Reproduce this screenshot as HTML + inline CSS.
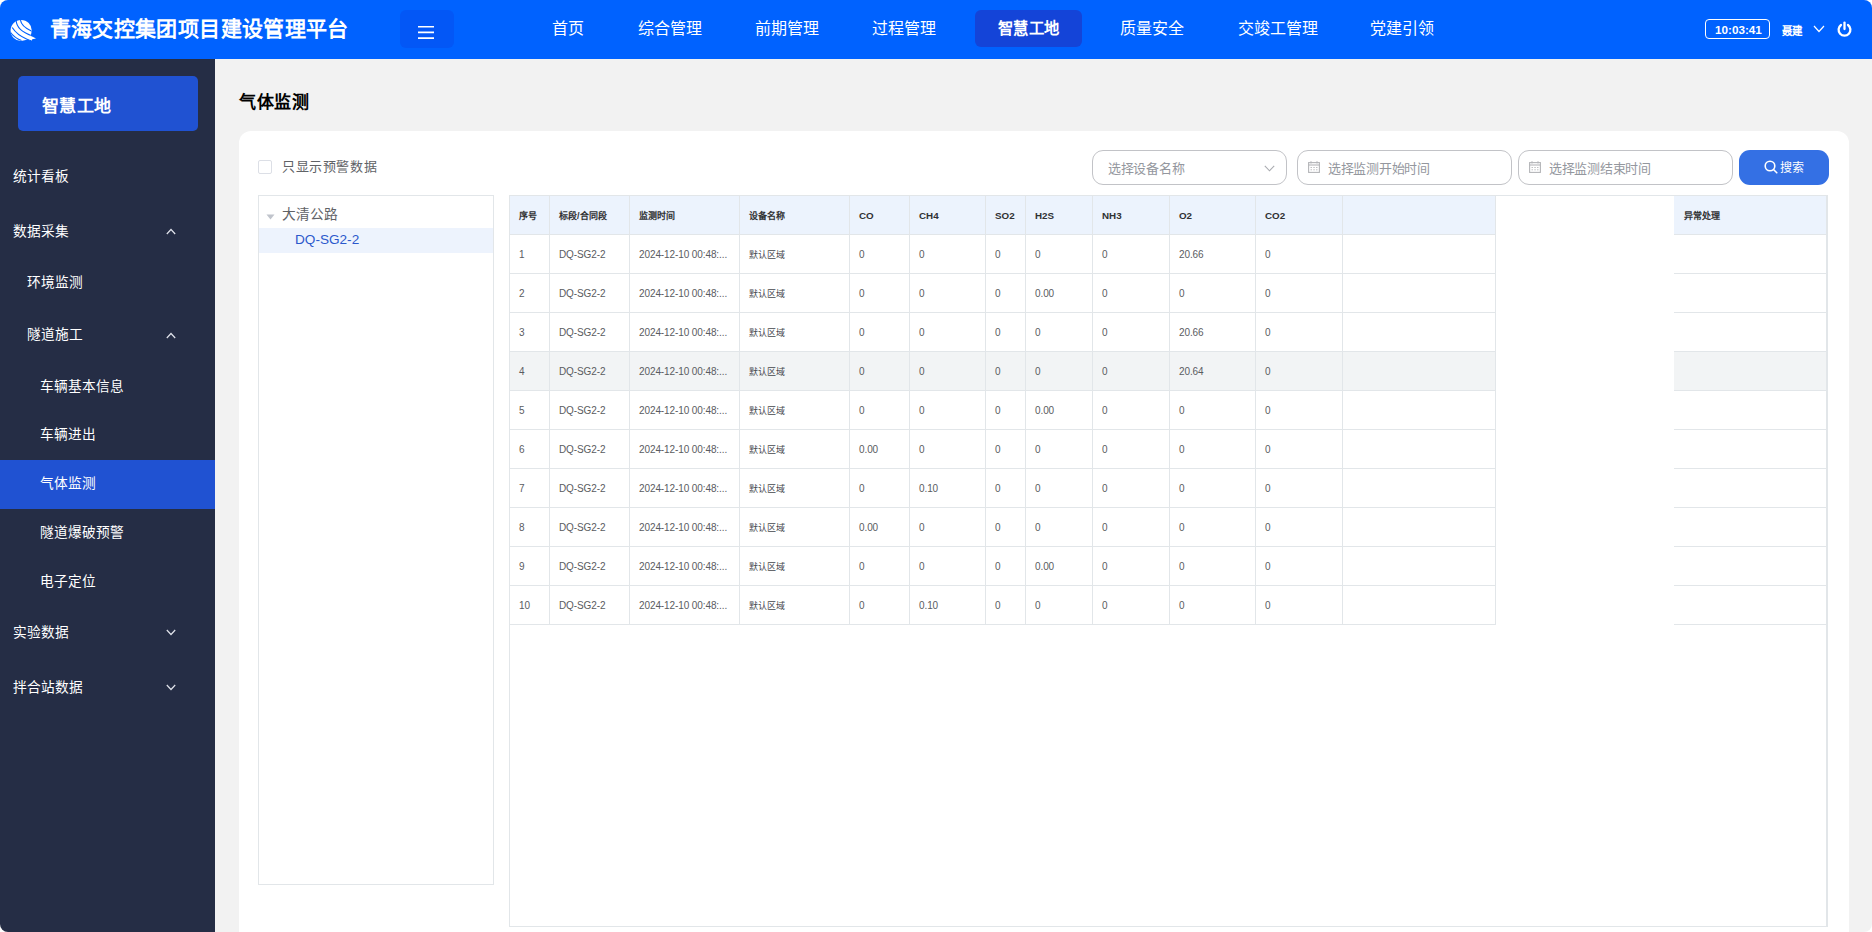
<!DOCTYPE html>
<html lang="zh-CN"><head><meta charset="utf-8">
<style>
*{box-sizing:border-box;margin:0;padding:0}
html,body{width:1872px;height:932px;overflow:hidden;background:#fff}
body{font-family:"Liberation Sans",sans-serif;position:relative}
.abs{position:absolute}
#app{position:absolute;left:0;top:0;width:1872px;height:932px;border-radius:8px;overflow:hidden;background:#f2f2f2}
#hdr{position:absolute;left:0;top:0;width:1872px;height:59px;background:#0062ff}
.t{position:absolute;white-space:nowrap;line-height:1}
.nav{color:#fff;font-size:16px;margin-top:0.6px}
#side{position:absolute;left:0;top:59px;width:215px;height:873px;background:#252d45}
.mi{position:absolute;color:#fff;font-size:13.7px;white-space:nowrap;line-height:1}
.chev{position:absolute;width:10px;height:7px}
#card{position:absolute;left:239px;top:131px;width:1610px;height:820px;background:#fff;border-radius:12px}
.inp{position:absolute;top:150px;height:35px;border:1px solid #c2c3c7;border-radius:11px;background:#fff}
.ph{position:absolute;color:#94979e;font-size:13px;letter-spacing:-0.3px;white-space:nowrap;line-height:1}
table.tb{position:absolute;border-collapse:collapse;table-layout:fixed}
.tb td,.tb th{border:1px solid #e4e7ed;height:39px;padding:0 0 0 10px;text-align:left;white-space:nowrap;overflow:hidden}
.tb th{background:#ecf3fd;color:#303133;font-size:10px;font-weight:bold}
.tb td{color:#606266;font-size:10px}
.tb tr.hv td{background:#f2f4f5}
.th{color:#303133;font-size:9.8px;font-weight:bold}
.td{color:#5a5c61;font-size:10px;letter-spacing:-0.1px}
.cj{font-size:9px}
.th.cj{margin-top:1px}
.td.cj{margin-top:0.8px;color:#45474c}
</style></head>
<body>
<div id="app">
  <div id="hdr">
    <!-- logo -->
    <svg class="abs" style="left:0;top:0" width="40" height="58" viewBox="0 0 40 58">
      <defs><clipPath id="lc"><circle cx="21.2" cy="30.5" r="10.6"/></clipPath></defs>
      <circle cx="21.2" cy="30.5" r="10.6" fill="#fff"/>
      <path d="M28.5 35 Q33 37 36 38.4 L32.2 39.3 L31.8 41 Q28 40 25.5 38.6 Z" fill="#fff"/>
      <g clip-path="url(#lc)" stroke="#0062ff" stroke-width="1.15" fill="none">
        <path d="M20.4 19.5 Q20.8 26.5 32.5 31.5"/>
        <path d="M16.2 20.5 Q16.6 30.5 32.5 36"/>
        <path d="M12.2 27.5 Q17 35 27 39.2"/>
        <path d="M10.2 32 Q14 37.5 21.5 40.5"/>
      </g>
      <path d="M27 39.2 Q29.5 40.2 31.8 41" stroke="#0062ff" stroke-width="1" fill="none"/>
    </svg>
    <div class="t" style="left:49.5px;top:17.5px;color:#fff;font-size:21px;letter-spacing:0.38px;font-weight:bold">青海交控集团项目建设管理平台</div>
    <div class="abs" style="left:400px;top:10px;width:54px;height:38px;border-radius:6px;background:#0357f6"></div>
    <svg class="abs" style="left:418px;top:24px" width="16" height="16" viewBox="0 0 16 16"><path d="M0 2.7 H16 M0 8.4 H16 M0 14.1 H16" stroke="#fff" stroke-width="1.6"/></svg>
    <div class="t nav" style="left:552px;top:20px">首页</div>
    <div class="t nav" style="left:638px;top:20px">综合管理</div>
    <div class="t nav" style="left:755px;top:20px">前期管理</div>
    <div class="t nav" style="left:872px;top:20px">过程管理</div>
    <div class="abs" style="left:975px;top:10px;width:107px;height:37px;border-radius:6px;background:#1444d8"></div>
    <div class="t nav" style="left:998px;top:20px;font-weight:bold;transform:scaleX(0.955);transform-origin:left">智慧工地</div>
    <div class="t nav" style="left:1120px;top:20px">质量安全</div>
    <div class="t nav" style="left:1238px;top:20px">交竣工管理</div>
    <div class="t nav" style="left:1370px;top:20px">党建引领</div>
    <div class="abs" style="left:1705px;top:19px;width:65px;height:20px;border:1.3px solid #fff;border-radius:4px"></div>
    <div class="t" style="left:1715px;top:24px;color:#fff;font-size:11.7px;font-weight:bold">10:03:41</div>
    <div class="t" style="left:1782px;top:26px;color:#fff;font-size:11px;font-weight:bold;transform:scaleX(0.95);transform-origin:left">聂建</div>
    <svg class="abs" style="left:1813px;top:25px" width="12" height="8" viewBox="0 0 12 8"><path d="M1 1 L6 6.5 L11 1" stroke="#fff" stroke-width="1.2" fill="none"/></svg>
    <svg class="abs" style="left:1836px;top:21px" width="17" height="16" viewBox="0 0 17 16"><path d="M5 4 A5.9 5.9 0 1 0 12 4" stroke="#fff" stroke-width="2.3" fill="none" stroke-linecap="round"/><path d="M8.5 1.6 V8" stroke="#fff" stroke-width="2.3" stroke-linecap="round"/></svg>
  </div>

  <div id="side">
    <div class="abs" style="left:18px;top:17px;width:180px;height:55px;border-radius:5px;background:#2052d2"></div>
    <div class="t" style="left:41.5px;top:38.5px;color:#fff;font-size:17px;letter-spacing:0.5px;font-weight:900">智慧工地</div>
    <div class="abs" style="left:0;top:401px;width:215px;height:49px;background:#2052d2"></div>
  </div>
  <!-- sidebar menu (page coords) -->
  <div class="mi" style="left:13px;top:170px">统计看板</div>
  <div class="mi" style="left:13px;top:225px">数据采集</div>
  <div class="mi" style="left:27px;top:276px">环境监测</div>
  <div class="mi" style="left:27px;top:328px">隧道施工</div>
  <div class="mi" style="left:40px;top:380px">车辆基本信息</div>
  <div class="mi" style="left:40px;top:428px">车辆进出</div>
  <div class="mi" style="left:40px;top:477px">气体监测</div>
  <div class="mi" style="left:40px;top:526px">隧道爆破预警</div>
  <div class="mi" style="left:40px;top:575px">电子定位</div>
  <div class="mi" style="left:13px;top:626px">实验数据</div>
  <div class="mi" style="left:13px;top:681px">拌合站数据</div>
  <svg class="chev" style="left:166px;top:228px" viewBox="0 0 10 7"><path d="M0.8 6 L5 1.5 L9.2 6" stroke="#dfe2ea" stroke-width="1.2" fill="none"/></svg>
  <svg class="chev" style="left:166px;top:332px" viewBox="0 0 10 7"><path d="M0.8 6 L5 1.5 L9.2 6" stroke="#dfe2ea" stroke-width="1.2" fill="none"/></svg>
  <svg class="chev" style="left:166px;top:629px" viewBox="0 0 10 7"><path d="M0.8 1 L5 5.5 L9.2 1" stroke="#dfe2ea" stroke-width="1.2" fill="none"/></svg>
  <svg class="chev" style="left:166px;top:684px" viewBox="0 0 10 7"><path d="M0.8 1 L5 5.5 L9.2 1" stroke="#dfe2ea" stroke-width="1.2" fill="none"/></svg>

  <div class="t" style="left:239px;top:93.5px;color:#000;font-size:17px;letter-spacing:0.6px;font-weight:bold">气体监测</div>
  <div id="card"></div>
  <div class="abs" style="left:258px;top:159.5px;width:14px;height:14px;border:1px solid #dcdfe6;border-radius:2px;background:#fff"></div>
<div class="t" style="left:282px;top:160px;color:#606266;font-size:13px;letter-spacing:0.6px">只显示预警数据</div>
<div class="abs" style="left:258px;top:195px;width:236px;height:690px;border:1px solid #e2e6e9"></div>
<svg class="abs" style="left:266px;top:214px" width="9" height="6" viewBox="0 0 9 6"><path d="M0.5 0.5 L8.5 0.5 L4.5 5.5 Z" fill="#c0c4cc"/></svg>
<div class="t" style="left:282px;top:208px;color:#606266;font-size:13.7px">大清公路</div>
<div class="abs" style="left:259px;top:228px;width:234px;height:25px;background:#edf3fd"></div>
<div class="t" style="left:295px;top:233px;color:#2b58cc;font-size:13.6px">DQ-SG2-2</div>
<div class="inp" style="left:1092px;width:195px"></div>
<div class="ph" style="left:1108px;top:162px">选择设备名称</div>
<svg class="abs" style="left:1264px;top:165px" width="11" height="7" viewBox="0 0 11 7"><path d="M0.8 0.8 L5.5 5.8 L10.2 0.8" stroke="#a9abb0" stroke-width="1.1" fill="none"/></svg>
<div class="inp" style="left:1297px;width:215px"></div>
<svg class="abs" style="left:1308px;top:160.5px" width="12" height="12" viewBox="0 0 12 12"><rect x="0.6" y="1.6" width="10.8" height="9.8" fill="none" stroke="#b4b5b8" stroke-width="1.1"/><path d="M0.6 4 H11.4" stroke="#b4b5b8" stroke-width="1.1"/><path d="M3 0.3 V2.5 M9 0.3 V2.5" stroke="#b4b5b8" stroke-width="1.1"/><path d="M2.5 6.5 h1.5 M5.3 6.5 h1.5 M8 6.5 h1.5 M2.5 8.8 h1.5 M5.3 8.8 h1.5 M8 8.8 h1.5" stroke="#bfc0c3" stroke-width="1"/></svg>
<div class="ph" style="left:1328px;top:162px">选择监测开始时间</div>
<div class="inp" style="left:1518px;width:215px"></div>
<svg class="abs" style="left:1529px;top:160.5px" width="12" height="12" viewBox="0 0 12 12"><rect x="0.6" y="1.6" width="10.8" height="9.8" fill="none" stroke="#b4b5b8" stroke-width="1.1"/><path d="M0.6 4 H11.4" stroke="#b4b5b8" stroke-width="1.1"/><path d="M3 0.3 V2.5 M9 0.3 V2.5" stroke="#b4b5b8" stroke-width="1.1"/><path d="M2.5 6.5 h1.5 M5.3 6.5 h1.5 M8 6.5 h1.5 M2.5 8.8 h1.5 M5.3 8.8 h1.5 M8 8.8 h1.5" stroke="#bfc0c3" stroke-width="1"/></svg>
<div class="ph" style="left:1549px;top:162px">选择监测结束时间</div>
<div class="abs" style="left:1739px;top:150px;width:90px;height:35px;border-radius:11px;background:#3470e4"></div>
<svg class="abs" style="left:1764px;top:160px" width="14" height="14" viewBox="0 0 14 14"><circle cx="6" cy="6" r="4.8" stroke="#fff" stroke-width="1.6" fill="none"/><path d="M9.5 9.5 L12.8 12.8" stroke="#fff" stroke-width="1.6" stroke-linecap="round"/></svg>
<div class="t" style="left:1780px;top:162px;color:#fff;font-size:12px">搜索</div>
<div class="abs" style="left:509px;top:195px;width:1319px;height:732px;border:1px solid #e2e6e9"></div>
<div class="abs" style="left:510px;top:196px;width:985px;height:38px;background:#ecf3fd"></div>
<div class="abs" style="left:1674px;top:196px;width:153px;height:38px;background:#ecf3fd"></div>
<div class="abs" style="left:510px;top:352px;width:985px;height:38px;background:#f2f4f5"></div>
<div class="abs" style="left:1674px;top:352px;width:153px;height:38px;background:#f2f4f5"></div>
<div class="abs" style="left:509px;top:234px;width:987px;height:1px;background:#e2e6e9"></div>
<div class="abs" style="left:1674px;top:234px;width:153px;height:1px;background:#e2e6e9"></div>
<div class="abs" style="left:509px;top:273px;width:987px;height:1px;background:#e2e6e9"></div>
<div class="abs" style="left:1674px;top:273px;width:153px;height:1px;background:#e2e6e9"></div>
<div class="abs" style="left:509px;top:312px;width:987px;height:1px;background:#e2e6e9"></div>
<div class="abs" style="left:1674px;top:312px;width:153px;height:1px;background:#e2e6e9"></div>
<div class="abs" style="left:509px;top:351px;width:987px;height:1px;background:#e2e6e9"></div>
<div class="abs" style="left:1674px;top:351px;width:153px;height:1px;background:#e2e6e9"></div>
<div class="abs" style="left:509px;top:390px;width:987px;height:1px;background:#e2e6e9"></div>
<div class="abs" style="left:1674px;top:390px;width:153px;height:1px;background:#e2e6e9"></div>
<div class="abs" style="left:509px;top:429px;width:987px;height:1px;background:#e2e6e9"></div>
<div class="abs" style="left:1674px;top:429px;width:153px;height:1px;background:#e2e6e9"></div>
<div class="abs" style="left:509px;top:468px;width:987px;height:1px;background:#e2e6e9"></div>
<div class="abs" style="left:1674px;top:468px;width:153px;height:1px;background:#e2e6e9"></div>
<div class="abs" style="left:509px;top:507px;width:987px;height:1px;background:#e2e6e9"></div>
<div class="abs" style="left:1674px;top:507px;width:153px;height:1px;background:#e2e6e9"></div>
<div class="abs" style="left:509px;top:546px;width:987px;height:1px;background:#e2e6e9"></div>
<div class="abs" style="left:1674px;top:546px;width:153px;height:1px;background:#e2e6e9"></div>
<div class="abs" style="left:509px;top:585px;width:987px;height:1px;background:#e2e6e9"></div>
<div class="abs" style="left:1674px;top:585px;width:153px;height:1px;background:#e2e6e9"></div>
<div class="abs" style="left:509px;top:624px;width:987px;height:1px;background:#e2e6e9"></div>
<div class="abs" style="left:1674px;top:624px;width:153px;height:1px;background:#e2e6e9"></div>
<div class="abs" style="left:549px;top:195px;width:1px;height:430px;background:#e2e6e9"></div>
<div class="abs" style="left:629px;top:195px;width:1px;height:430px;background:#e2e6e9"></div>
<div class="abs" style="left:739px;top:195px;width:1px;height:430px;background:#e2e6e9"></div>
<div class="abs" style="left:849px;top:195px;width:1px;height:430px;background:#e2e6e9"></div>
<div class="abs" style="left:909px;top:195px;width:1px;height:430px;background:#e2e6e9"></div>
<div class="abs" style="left:985px;top:195px;width:1px;height:430px;background:#e2e6e9"></div>
<div class="abs" style="left:1025px;top:195px;width:1px;height:430px;background:#e2e6e9"></div>
<div class="abs" style="left:1092px;top:195px;width:1px;height:430px;background:#e2e6e9"></div>
<div class="abs" style="left:1169px;top:195px;width:1px;height:430px;background:#e2e6e9"></div>
<div class="abs" style="left:1255px;top:195px;width:1px;height:430px;background:#e2e6e9"></div>
<div class="abs" style="left:1342px;top:195px;width:1px;height:430px;background:#e2e6e9"></div>
<div class="abs" style="left:1495px;top:195px;width:1px;height:430px;background:#e2e6e9"></div>
<div class="abs" style="left:1826px;top:195px;width:1px;height:731px;background:#e2e6e9"></div>
<div class="t th cj" style="left:519px;top:210.5px">序号</div>
<div class="t th cj" style="left:559px;top:210.5px">标段/合同段</div>
<div class="t th cj" style="left:639px;top:210.5px">监测时间</div>
<div class="t th cj" style="left:749px;top:210.5px">设备名称</div>
<div class="t th" style="left:859px;top:210.5px">CO</div>
<div class="t th" style="left:919px;top:210.5px">CH4</div>
<div class="t th" style="left:995px;top:210.5px">SO2</div>
<div class="t th" style="left:1035px;top:210.5px">H2S</div>
<div class="t th" style="left:1102px;top:210.5px">NH3</div>
<div class="t th" style="left:1179px;top:210.5px">O2</div>
<div class="t th" style="left:1265px;top:210.5px">CO2</div>
<div class="t th cj" style="left:1684px;top:210.5px">异常处理</div>
<div class="t td" style="left:519px;top:250px">1</div>
<div class="t td" style="left:559px;top:250px">DQ-SG2-2</div>
<div class="t td" style="left:639px;top:250px">2024-12-10 00:48:...</div>
<div class="t td cj" style="left:749px;top:250px">默认区域</div>
<div class="t td" style="left:859px;top:250px">0</div>
<div class="t td" style="left:919px;top:250px">0</div>
<div class="t td" style="left:995px;top:250px">0</div>
<div class="t td" style="left:1035px;top:250px">0</div>
<div class="t td" style="left:1102px;top:250px">0</div>
<div class="t td" style="left:1179px;top:250px">20.66</div>
<div class="t td" style="left:1265px;top:250px">0</div>
<div class="t td" style="left:519px;top:289px">2</div>
<div class="t td" style="left:559px;top:289px">DQ-SG2-2</div>
<div class="t td" style="left:639px;top:289px">2024-12-10 00:48:...</div>
<div class="t td cj" style="left:749px;top:289px">默认区域</div>
<div class="t td" style="left:859px;top:289px">0</div>
<div class="t td" style="left:919px;top:289px">0</div>
<div class="t td" style="left:995px;top:289px">0</div>
<div class="t td" style="left:1035px;top:289px">0.00</div>
<div class="t td" style="left:1102px;top:289px">0</div>
<div class="t td" style="left:1179px;top:289px">0</div>
<div class="t td" style="left:1265px;top:289px">0</div>
<div class="t td" style="left:519px;top:328px">3</div>
<div class="t td" style="left:559px;top:328px">DQ-SG2-2</div>
<div class="t td" style="left:639px;top:328px">2024-12-10 00:48:...</div>
<div class="t td cj" style="left:749px;top:328px">默认区域</div>
<div class="t td" style="left:859px;top:328px">0</div>
<div class="t td" style="left:919px;top:328px">0</div>
<div class="t td" style="left:995px;top:328px">0</div>
<div class="t td" style="left:1035px;top:328px">0</div>
<div class="t td" style="left:1102px;top:328px">0</div>
<div class="t td" style="left:1179px;top:328px">20.66</div>
<div class="t td" style="left:1265px;top:328px">0</div>
<div class="t td" style="left:519px;top:367px">4</div>
<div class="t td" style="left:559px;top:367px">DQ-SG2-2</div>
<div class="t td" style="left:639px;top:367px">2024-12-10 00:48:...</div>
<div class="t td cj" style="left:749px;top:367px">默认区域</div>
<div class="t td" style="left:859px;top:367px">0</div>
<div class="t td" style="left:919px;top:367px">0</div>
<div class="t td" style="left:995px;top:367px">0</div>
<div class="t td" style="left:1035px;top:367px">0</div>
<div class="t td" style="left:1102px;top:367px">0</div>
<div class="t td" style="left:1179px;top:367px">20.64</div>
<div class="t td" style="left:1265px;top:367px">0</div>
<div class="t td" style="left:519px;top:406px">5</div>
<div class="t td" style="left:559px;top:406px">DQ-SG2-2</div>
<div class="t td" style="left:639px;top:406px">2024-12-10 00:48:...</div>
<div class="t td cj" style="left:749px;top:406px">默认区域</div>
<div class="t td" style="left:859px;top:406px">0</div>
<div class="t td" style="left:919px;top:406px">0</div>
<div class="t td" style="left:995px;top:406px">0</div>
<div class="t td" style="left:1035px;top:406px">0.00</div>
<div class="t td" style="left:1102px;top:406px">0</div>
<div class="t td" style="left:1179px;top:406px">0</div>
<div class="t td" style="left:1265px;top:406px">0</div>
<div class="t td" style="left:519px;top:445px">6</div>
<div class="t td" style="left:559px;top:445px">DQ-SG2-2</div>
<div class="t td" style="left:639px;top:445px">2024-12-10 00:48:...</div>
<div class="t td cj" style="left:749px;top:445px">默认区域</div>
<div class="t td" style="left:859px;top:445px">0.00</div>
<div class="t td" style="left:919px;top:445px">0</div>
<div class="t td" style="left:995px;top:445px">0</div>
<div class="t td" style="left:1035px;top:445px">0</div>
<div class="t td" style="left:1102px;top:445px">0</div>
<div class="t td" style="left:1179px;top:445px">0</div>
<div class="t td" style="left:1265px;top:445px">0</div>
<div class="t td" style="left:519px;top:484px">7</div>
<div class="t td" style="left:559px;top:484px">DQ-SG2-2</div>
<div class="t td" style="left:639px;top:484px">2024-12-10 00:48:...</div>
<div class="t td cj" style="left:749px;top:484px">默认区域</div>
<div class="t td" style="left:859px;top:484px">0</div>
<div class="t td" style="left:919px;top:484px">0.10</div>
<div class="t td" style="left:995px;top:484px">0</div>
<div class="t td" style="left:1035px;top:484px">0</div>
<div class="t td" style="left:1102px;top:484px">0</div>
<div class="t td" style="left:1179px;top:484px">0</div>
<div class="t td" style="left:1265px;top:484px">0</div>
<div class="t td" style="left:519px;top:523px">8</div>
<div class="t td" style="left:559px;top:523px">DQ-SG2-2</div>
<div class="t td" style="left:639px;top:523px">2024-12-10 00:48:...</div>
<div class="t td cj" style="left:749px;top:523px">默认区域</div>
<div class="t td" style="left:859px;top:523px">0.00</div>
<div class="t td" style="left:919px;top:523px">0</div>
<div class="t td" style="left:995px;top:523px">0</div>
<div class="t td" style="left:1035px;top:523px">0</div>
<div class="t td" style="left:1102px;top:523px">0</div>
<div class="t td" style="left:1179px;top:523px">0</div>
<div class="t td" style="left:1265px;top:523px">0</div>
<div class="t td" style="left:519px;top:562px">9</div>
<div class="t td" style="left:559px;top:562px">DQ-SG2-2</div>
<div class="t td" style="left:639px;top:562px">2024-12-10 00:48:...</div>
<div class="t td cj" style="left:749px;top:562px">默认区域</div>
<div class="t td" style="left:859px;top:562px">0</div>
<div class="t td" style="left:919px;top:562px">0</div>
<div class="t td" style="left:995px;top:562px">0</div>
<div class="t td" style="left:1035px;top:562px">0.00</div>
<div class="t td" style="left:1102px;top:562px">0</div>
<div class="t td" style="left:1179px;top:562px">0</div>
<div class="t td" style="left:1265px;top:562px">0</div>
<div class="t td" style="left:519px;top:601px">10</div>
<div class="t td" style="left:559px;top:601px">DQ-SG2-2</div>
<div class="t td" style="left:639px;top:601px">2024-12-10 00:48:...</div>
<div class="t td cj" style="left:749px;top:601px">默认区域</div>
<div class="t td" style="left:859px;top:601px">0</div>
<div class="t td" style="left:919px;top:601px">0.10</div>
<div class="t td" style="left:995px;top:601px">0</div>
<div class="t td" style="left:1035px;top:601px">0</div>
<div class="t td" style="left:1102px;top:601px">0</div>
<div class="t td" style="left:1179px;top:601px">0</div>
<div class="t td" style="left:1265px;top:601px">0</div>
</div>
</body></html>
